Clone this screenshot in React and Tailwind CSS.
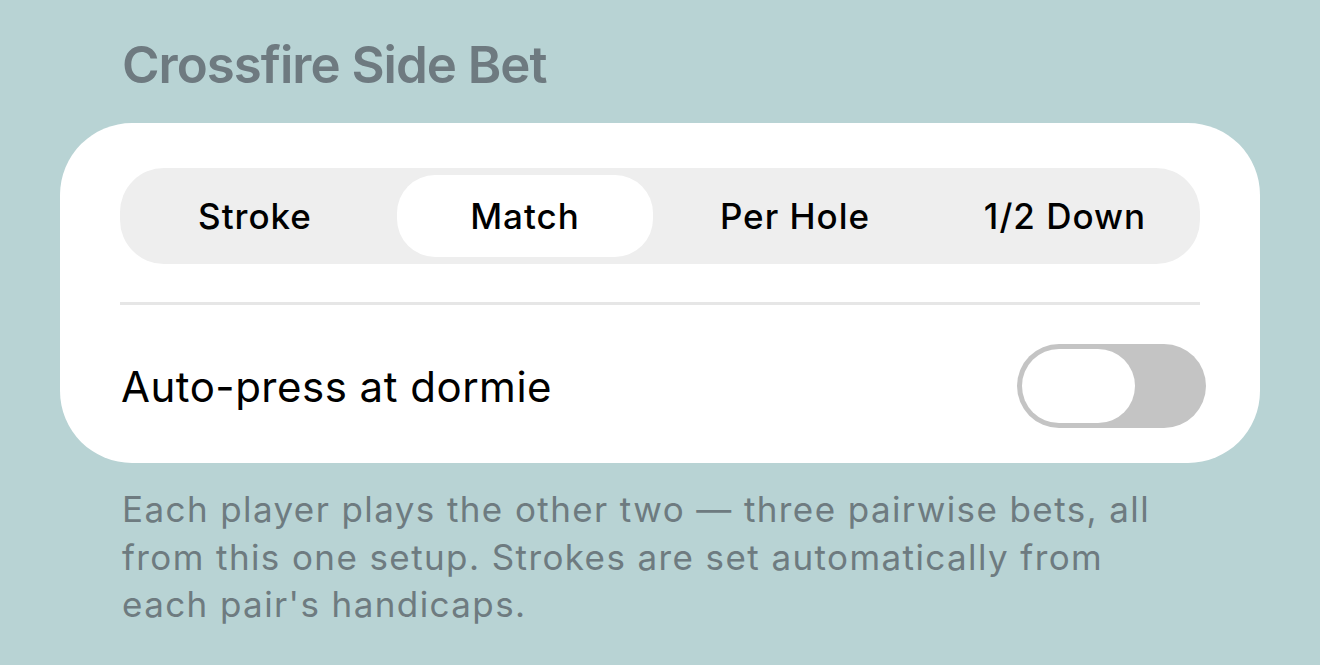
import React from 'react';

const segments = ['Stroke', 'Match', 'Per Hole', '1/2 Down'];

export default function App() {
  const selected = 'Match';

  return (
    <div className="min-h-[665px] w-[1320px] bg-[#b8d3d4] px-[60px] pt-[35px] font-['Inter',sans-serif]">
      <h2 className="pl-[62px] text-[51px] leading-[60px] font-semibold tracking-[-1px] text-[#6e7a80]">
        Crossfire Side Bet
      </h2>

      <div className="mt-[28px] rounded-[72px] bg-white px-[60px] pt-[45px] pb-[35px]">
        <div className="grid h-[96px] grid-cols-4 rounded-[44px] bg-[#eeeeee]">
          {segments.map((s) => (
            <div key={s} className="p-[7px]">
              <div
                className={`flex h-full items-center justify-center rounded-[38px] text-[35px] font-medium tracking-[1px] text-black ${
                  s === selected ? 'bg-white' : ''
                }`}
              >
                {s}
              </div>
            </div>
          ))}
        </div>

        <div className="mt-[38px] h-[3px] bg-[#e6e6e6]" />

        <div className="mt-[39px] flex items-center justify-between">
          <span className="pl-[1px] text-[42px] tracking-[0.5px] text-black">Auto-press at dormie</span>
          <div className="mr-[-6px] flex h-[84px] w-[189px] items-center rounded-full bg-[#c4c4c4] p-[5px]">
            <div className="h-[74px] w-[113px] rounded-full bg-white" />
          </div>
        </div>
      </div>

      <p className="mt-[23px] pl-[62px] pr-[78px] text-[35px] leading-[47.5px] tracking-[1.4px] text-[#6e7b80]">
        Each player plays the other two — three pairwise bets, all from this one setup. Strokes are set automatically from each pair's handicaps.
      </p>
    </div>
  );
}
